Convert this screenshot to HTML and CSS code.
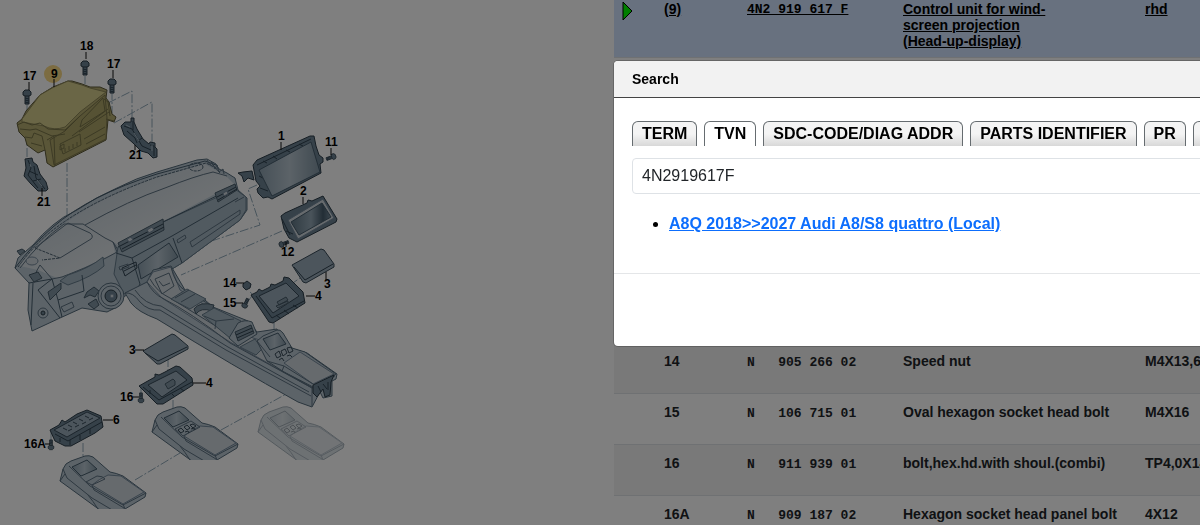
FILE: index.html
```html
<!DOCTYPE html>
<html lang="en">

<head>
    <meta charset="UTF-8">
    <meta name="viewport" content="width=device-width, initial-scale=1.0">
    <title>Parts Catalogue</title>
    <link rel="stylesheet" href="styles.css">
</head>

<body>
    <div class="page">
        <div class="diagram">
            <svg class="diagram-svg" width="350" height="515" viewBox="0 0 350 515">
                <defs>
                    <linearGradient id="topGrad" x1="0" y1="0" x2="1" y2="1">
                        <stop offset="0" stop-color="#b4c2cc" />
                        <stop offset="0.6" stop-color="#dce2e6" />
                        <stop offset="1" stop-color="#a8b8c4" />
                    </linearGradient>
                    <linearGradient id="glass" x1="0" y1="0" x2="1" y2="0">
                        <stop offset="0" stop-color="#8ca0ae" />
                        <stop offset="0.5" stop-color="#b8c6d0" />
                        <stop offset="1" stop-color="#8094a2" />
                    </linearGradient>
                    <linearGradient id="darkGlass" x1="0" y1="0" x2="1" y2="0">
                        <stop offset="0" stop-color="#607684" />
                        <stop offset="0.5" stop-color="#94a8b6" />
                        <stop offset="0.8" stop-color="#465c6c" />
                        <stop offset="1" stop-color="#768c9c" />
                    </linearGradient>
                    <clipPath id="cutMid">
                        <rect x="0" y="400" width="350" height="60" />
                    </clipPath>
                    <!-- bolt, head up -->
                    <g id="bolt" class="dark">
                        <path d="M-2 3h4v10h-4z" />
                        <path d="M-4 1l2-2h4l2 2v3l-2 1h-4l-2-1z" />
                        <path class="line" d="M-2 7l4 1M-2 9l4 1M-2 11l4 1" />
                    </g>
                    <!-- rear part of the centre console -->
                    <g id="consoleTop">
                        <path class="metal" d="M155 420Q157 414 163 412L177 407Q181 406 185 408L202 423Q208 424 215 427L238 444L237 448L217 460L196 464L152 432Z" />
                        <path class="line" d="M155 420L159 429L184 449L206 462M152 432L157 425M161 417L182 437L215 456L238 444M184 436L186 441L216 459" />
                        <path class="light" d="M184 436Q191 430 200 426L213 427L236 443L215 455Z" />
                        <path class="line" d="M217 460L215 455M180 446Q185 452 190 460" />
                        <path d="M164 418L179 411L189 420L173 427Z" fill="url(#glass)" class="edge" />
                    </g>
                    <g id="knobs">
                        <path class="line" d="M175 429L191 421L200 427L183 436Z" />
                        <path class="knob" d="M178 430l3-2 3 3-3 2zM184 427l3-2 3 3-3 2zM190 425l3-1 3 2-3 2zM185 432l3-1 1 2M191 429l3-1 1 2" />
                    </g>
                </defs>

                <!-- assembly lines -->
                <g class="axis">
                    <path d="M85 76V84M27 103V158M67 163V240M112 91V113M108 103L132 91V120M114 123L152 102V142" />
                    <path d="M257 185L248 189L260 225L160 258M282 231L181 275M274 323V345M290 285L300 278M168 358V375M173 400V416M83 443V467M135 480L180 453M221 430L288 393M250 292L260 301M247 302L253 295M51 432V442M141 386V394" />
                </g>

                <!-- dashboard -->
                <path class="metal" d="M15 268L18 258L33 245Q42 234 53 225Q62 217 77 210Q96 197 117 188Q136 178 157 172L197 160L207 159L216 164L219 169L227 173L235 178L238 190L247 198V210L240 220L182 263L137 290L123 297L117 307L107 312L82 308L60 318L32 331L28 310L29 283Z" />
                <path d="M20 266Q38 240 64 224Q100 197 155 178L205 164L226 176L234 184L118 245L113 242L115 253L72 273L57 278L38 270Z" fill="url(#topGrad)" />
                <path class="edge" d="M15 268Q33 244 53 227Q90 195 157 174L205 161L216 165" />
                <path class="seam" d="M18 267Q36 242 57 227Q93 200 157 177L206 163L218 169" />
                <path class="line" d="M20 268Q40 241 64 224L83 224L105 238L113 242L118 250M85 225Q130 200 165 188Q195 176 213 172L227 176" />
                <path class="line" d="M68 223L90 233Q94 236 91 239L60 258M35 248L68 223M113 242L117 252Q98 263 72 273Q62 278 52 279L40 265Q36 271 35 276" />
                <path class="seam" d="M35 248L60 258L42 260" />
                <path class="shade" d="M68 275Q90 268 103 257L104 266Q92 277 68 285L60 281Z" />
                <path class="shade" d="M118 247L163 222L235 189L246 197V210L240 220L182 263L137 290L124 294L114 274Z" />
                <path class="edge" d="M118 247L163 222L235 187L237 190M116 253L132 258L172 236L238 198M132 258L140 284L137 290M173 238L182 263M52 279L58 300L84 291L82 275M58 300L62 317M29 283L52 279L38 290L60 318M33 283L31 325" />
                <path class="slot" d="M118 243L163 219L164 230L122 252ZM215 193L235 184L237 190L218 202ZM48 292L61 283L61 289L50 300Z" />
                <path class="line" d="M120 246L163 224M122 249L164 227M217 197L236 187M218 200L237 189M122 268L136 262L137 268L125 276ZM124 271l12-6" />
                <path d="M127 239l4-2 2 3-4 2zM147 230l5-3 2 3-5 3zM223 193l4-2 1 3-4 2z" class="light" />
                <path d="M138 265L169 243L178 257L141 279Z" fill="url(#glass)" class="edge" />
                <path class="line" d="M190 242L240 210L240 214L192 247ZM235 202L244 197M177 240L185 235L186 238L178 243ZM61 307L72 302L74 307L64 312ZM119 267l9-3 1 3-9 3z" />
                <path class="slot" d="M84 298l6-3 5 2 4-6-5-4-7 5zM88 304l8-5 3 6-5 4z" />
                <circle class="metal" cx="111" cy="296" r="13" />
                <circle class="line" cx="111" cy="296" r="10" />
                <circle class="dark" cx="111" cy="296" r="6" />
                <circle class="light" cx="112" cy="296" r="2" />
                <circle class="line" cx="43" cy="313" r="5" />
                <circle class="dark" cx="43" cy="313" r="2" />
                <ellipse class="light" cx="32" cy="261" rx="6" ry="4" />
                <ellipse class="seam" cx="196" cy="167" rx="7" ry="4" />
                <path class="line" d="M207 160l3 5 2-3 3 7 2-4 2 7 4-3 1 5M211 163l9 10" />
                <path class="slot" d="M17 251l5-2 3 2-5 4zM29 275l9-3 4 6-8 4z" />

                <!-- centre console -->
                <path class="metal" d="M125 293L147 282L153 270L171 266L185 290L205 300L213 307L248 321L257 332L277 329L283 343L293 349L307 353L337 374L336 379L332 381V396L323 398L320 392L312 407L298 402Q235 367 157 319Q138 312 131 303Z" />
                <path class="light" d="M147 282L162 298L230 342L266 362L312 388L335 376L307 353L285 347L253 338L200 302L180 290L171 267L153 272Z" />
                <path class="line" d="M125 293Q133 292 140 302Q148 311 160 310L226 350L311 396M147 282Q153 294 164 299Q190 312 230 343L312 388V406M135 290Q145 305 161 306L228 347L309 392M171 267Q175 285 186 291L214 307M150 279Q157 292 170 298L232 336" />
                <path class="shade" d="M171 299L187 289L206 299L190 309Z" />
                <path class="line" d="M175 298l14-8M181 302l14-8M155 279l14-6 5 13-12 8zM159 281l4 5 7-3" />
                <path class="slot" d="M194 309Q200 301 214 305L212 311Q201 307 196 314Z" />
                <path class="shade" d="M202 315L214 308L241 321L230 338Z" />
                <path class="line" d="M204 316l12 5-1 8M216 321l18-2" />
                <path class="metal" d="M229 338L238 323Q245 319 252 322L257 334L238 346Z" />
                <path class="slot" d="M235 332L251 325L254 333L238 341Z" />
                <path class="line" d="M236 335l16-7M237 338l16-7" />
                <path class="shade" d="M240 347L255 339L262 349L256 355Z" />
                <path class="metal" d="M257 341L263 336L277 330Q280 329 283 333L292 348L305 352L336 374L313 387L284 372L267 361Z" />
                <path d="M263 339L278 333L286 344L270 350Z" fill="url(#glass)" class="edge" />
                <path class="knob" d="M275 354l4-3 2 5-4 2zM281 351l4-2 2 4-4 3zM287 348l4-1 2 4-4 2zM279 360l3-2 2 3M287 356l3-1 2 2" />
                <path class="light" d="M284 363L300 352L334 374L313 384Z" />
                <path class="line" d="M267 361L284 366L313 384M284 366L282 371L313 388M257 341L270 357" />
                <path class="dark" d="M313 385L334 375L331 382L330 395L325 397L323 389L317 397L313 393Z" />
                <path class="line" d="M318 386l3 6M323 384l4 5M328 382v8" />

                <!-- console variants -->
                <g clip-path="url(#cutMid)">
                    <use href="#consoleTop" />
                    <use href="#knobs" />
                    <g opacity="0.5">
                        <use href="#consoleTop" x="106" />
                        <use href="#knobs" x="106" />
                    </g>
                </g>
                <g transform="translate(-92 49)" clip-path="url(#cutMid)">
                    <use href="#consoleTop" />
                    <path class="line" d="M178 433l11-6q6 0 8 3l-13 6z" />
                </g>

                <!-- 9 control unit -->
                <path class="unit" d="M17 123L22 119L26 111L40 95L53 87L68 81L72 81L82 84L90 87L100 87L107 90L106 98L109 102L112 114L116 117L114 122L108 120L106 140L53 167L47 163L45 150L38 153L27 145L25 138L19 132Z" />
                <path class="unit-top" d="M22 119L40 95Q52 87 68 81L82 85L90 88L106 92L80 112L65 127Q54 131 44 126L22 122Z" />
                <path class="unit-side" d="M65 131L80 116L105 95L107 118L106 139L54 165L50 140Z" />
                <path class="unit-line" d="M17 125L24 122L32 125L40 123L48 129L65 130L80 116M20 129L30 130L36 129L52 136L65 134M25 137L32 138L34 133L42 136L45 150M47 140L54 136L55 166M72 136L108 109M79 132L109 112M82 120L103 98L105 111L80 127ZM60 144L80 134L81 145L63 154ZM65 148v4M69 146v4M73 144v4M77 142v4M84 139L105 127M86 144L105 134M31 143L42 146" />
                <path class="unit-line" d="M60 146l4-2v4l-4 2zM104 99l4 3 2 14M106 119l8 2" />

                <!-- brackets -->
                <path class="dark" d="M25 159L32 158L33 162L37 165L40 174L46 182L48 189L46 191L38 191L31 184L24 176L26 168Z" />
                <path class="line" d="M28 160l3 8-3 7 10 13M34 166l2 12 9 11M29 171l9 4M33 181l8-2" />
                <path class="dark" d="M121 126L125 122L131 122V118H134V122L137 129L143 139L149 144L150 142L155 143V147L157 149V157L153 158L148 153L141 151L133 143L124 135Z" />
                <path class="line" d="M124 126l8 3 10 17 9 4M127 131l8 7 2 5M133 121v9M150 145l4 1v10M138 141l4-3" />
                <path class="glint" d="M30 164l1 3M37 180l5 6M126 125l4 2M134 133l5 8M152 145v6" />

                <!-- 1 display -->
                <path class="dark" d="M238 173L243 172L252 171L254 180L248 178L244 182L242 176Z" />
                <path class="dark" d="M253 165L257 160L310 136L314 136L316 146L319 155L323 158L323 162L320 164L321 173L272 199L268 197L263 198L258 193L257 189L260 186L256 181Z" />
                <path class="line" d="M257 165L311 139M263 161l4 2M273 156l4 3M286 150l4 2M299 144l4 2M260 188l8 3M259 176l4 2" />
                <path d="M259 170L311 142L320 172L272 196Z" fill="url(#glass)" class="edge" />
                <!-- 2 display -->
                <path class="dark" d="M281 216L285 213L307 203L308 200L312 201L323 196L337 219L336 222L297 242L289 238L284 229Z" />
                <path class="line" d="M282 219l8 16M286 231l7 3" />
                <path class="light" d="M288 220L323 199L334 218L298 239Z" />
                <path d="M291 222L322 203L331 217L299 235Z" fill="url(#darkGlass)" class="edge" />
                <!-- 3, 4 right -->
                <path class="plate" d="M292 265L321 249L324 250L334 264V267L306 283L303 282Z" />
                <path class="line" d="M294 267L305 280L333 264" />
                <path class="dark" d="M251 295L257 292L259 289L262 291L270 287L271 284L275 285L283 281L284 277L289 278L303 292L305 303L273 323L269 322Z" />
                <path class="plate" d="M259 296L286 283L299 296L273 313Z" />
                <path class="line" d="M256 296L272 318L304 301M276 315l4 3M284 310l5 4M293 305l5 3" />
                <path class="slot" d="M277 302l9-5 2 3-9 5zM276 306l12-5v2l-10 5z" />
                <!-- 3, 4 left -->
                <path class="plate" d="M143 351L172 334L175 335L188 346V349L160 364L157 364Z" />
                <path class="line" d="M145 353L158 361L187 347" />
                <path class="dark" d="M139 386L146 382L155 377V374L159 375L165 372L176 366L180 367L192 378L193 385L163 404L157 404Z" />
                <path class="plate" d="M148 385L176 371L187 380L162 397Z" />
                <path class="line" d="M143 387L159 400L192 382M150 390v4M172 394l3 3M180 388l4 3" />
                <path class="slot" d="M165 384l8-5 2 2v4l-7 4z" />
                <!-- 6 -->
                <path class="dark" d="M50 430L59 425L62 420L65 422L77 414L87 410L101 416L103 427L95 433L71 446L65 446L55 441Z" />
                <path class="line" d="M55 434L68 441L102 422M60 438v4M70 440v5M80 435v5M90 429v5" />
                <path class="plate" d="M54 430L87 412L100 418L67 437Z" />
                <path class="knob" d="M63 428l4 2M68 425l4 2M73 422l4 2M79 419l4 2M85 416l4 2M68 431l4-2M75 427l4-2M82 424l4-2M89 420l4-2" />

                <!-- bolts and nut -->
                <use href="#bolt" x="85" y="62" />
                <use href="#bolt" x="27" y="91" />
                <use href="#bolt" x="112" y="80" />
                <use href="#bolt" transform="translate(335 156) rotate(70) scale(.7)" />
                <use href="#bolt" transform="translate(280 245) rotate(-110) scale(.7)" />
                <use href="#bolt" transform="translate(244 307) rotate(205) scale(.7)" />
                <use href="#bolt" transform="translate(141 402) rotate(180) scale(.7)" />
                <use href="#bolt" transform="translate(51 449) rotate(180) scale(.7)" />
                <path class="dark" d="M243 284l4-3 4 3-1 4-4 2-3-3z" />

                <!-- callouts -->
                <circle class="marker" cx="53" cy="74" r="9" />
                <path class="leader" d="M86 52v7M29 82v8M113 70v8M54 79v8M42 188v8M135 145v5M281 142v8M331 148v7M303 197v7M286 242v5M326 272v8M306 296h9M236 283h8M236 303h7M135 350h9M193 383h13M133 397h6M103 420h10M45 444h5" />
                <g class="callout">
                    <text x="80" y="50">18</text>
                    <text x="23" y="80">17</text>
                    <text x="51" y="78">9</text>
                    <text x="107" y="68">17</text>
                    <text x="129" y="159">21</text>
                    <text x="37" y="206">21</text>
                    <text x="278" y="140">1</text>
                    <text x="325" y="146">11</text>
                    <text x="300" y="195">2</text>
                    <text x="281" y="256">12</text>
                    <text x="324" y="288">3</text>
                    <text x="315" y="300">4</text>
                    <text x="223" y="287">14</text>
                    <text x="223" y="307">15</text>
                    <text x="129" y="354">3</text>
                    <text x="206" y="387">4</text>
                    <text x="120" y="401">16</text>
                    <text x="113" y="424">6</text>
                    <text x="24" y="448">16A</text>
                </g>
            </svg>
        </div>

        <div class="parts">
            <table class="parts-table">
                <colgroup>
                    <col class="col-mark">
                    <col class="col-pos">
                    <col class="col-number">
                    <col class="col-name">
                    <col class="col-note">
                </colgroup>
                <tbody>
                    <tr class="selected">
                        <td><svg class="arrow" width="12" height="20" viewBox="0 0 12 20"><path d="M1 1v18l9-9z" /></svg></td>
                        <td>(9)</td>
                        <td class="number">4N2 919 617 F</td>
                        <td>Control unit for wind-<br>screen projection<br>(Head-up-display)</td>
                        <td>rhd</td>
                    </tr>
                    <tr class="covered">
                        <td colspan="5"></td>
                    </tr>
                    <tr class="striped">
                        <td></td>
                        <td>14</td>
                        <td class="number">N   905 266 02</td>
                        <td>Speed nut</td>
                        <td>M4X13,6</td>
                    </tr>
                    <tr>
                        <td></td>
                        <td>15</td>
                        <td class="number">N   106 715 01</td>
                        <td>Oval hexagon socket head bolt</td>
                        <td>M4X16</td>
                    </tr>
                    <tr class="striped">
                        <td></td>
                        <td>16</td>
                        <td class="number">N   911 939 01</td>
                        <td>bolt,hex.hd.with shoul.(combi)</td>
                        <td>TP4,0X14</td>
                    </tr>
                    <tr>
                        <td></td>
                        <td>16A</td>
                        <td class="number">N   909 187 02</td>
                        <td>Hexagon socket head panel bolt<br>Benennung 10.07.2018</td>
                        <td>4X12</td>
                    </tr>
                </tbody>
            </table>
        </div>
    </div>

    <div class="backdrop"></div>

    <div class="modal" role="dialog" aria-labelledby="searchTitle">
        <div class="modal-header">
            <label id="searchTitle" for="searchInput">Search</label>
        </div>
        <div class="modal-body">
            <div class="tabs">
                <button type="button" class="tab">TERM</button>
                <button type="button" class="tab active">TVN</button>
                <button type="button" class="tab">SDC-CODE/DIAG ADDR</button>
                <button type="button" class="tab">PARTS IDENTIFIER</button>
                <button type="button" class="tab">PR</button>
                <button type="button" class="tab tab-more"></button>
            </div>
            <input type="text" id="searchInput" class="search-input" value="4N2919617F">
            <ul class="results">
                <li><a href="#">A8Q 2018&gt;&gt;2027 Audi A8/S8 quattro (Local)</a></li>
            </ul>
        </div>
        <div class="modal-footer"></div>
    </div>
</body>

</html>
```

FILE: styles.css
```css
* {
    box-sizing: border-box;
}

body {
    margin: 0;
    font-family: "Liberation Sans", Arial, sans-serif;
    font-size: 14px;
    background-color: white;
    height: 100vh;
    overflow: hidden;
}

.page {
    display: flex;
    height: 100vh;
    overflow: hidden;
}

.diagram {
    flex: 0 0 614px;
}

.diagram-svg {
    display: block;
}

/* diagram drawing */
.diagram-svg path,
.diagram-svg circle,
.diagram-svg ellipse {
    stroke-linejoin: round;
    stroke-width: 1;
}

.metal {
    fill: #b8c6d0;
    stroke: #546a7a;
}

.light {
    fill: #ccd4da;
    stroke: #74889a;
}

.shade {
    fill: #a2b4c0;
    stroke: #647a8a;
}

.plate {
    fill: #98aab8;
    stroke: #384a58;
}

.dark {
    fill: #6c8292;
    stroke: #2c3c48;
}

.slot {
    fill: #8094a2;
    stroke: #465a68;
}

.edge {
    stroke: #465c6c;
}

path.edge:not([fill]) {
    fill: none;
}

.line,
.seam,
.knob {
    fill: none;
    stroke: #5c7080;
}

.seam {
    stroke-dasharray: 3 1;
    stroke: #4c6070;
}

.knob {
    stroke: #384a58;
}

.dark .line,
.dark + .line,
.plate + .line,
.slot + .line {
    stroke: #304250;
}

.glint {
    fill: none;
    stroke: #a4b6c2;
}

.axis {
    fill: none;
    stroke: #90a8b8;
    stroke-dasharray: 9 2 2 2;
}

.unit {
    fill: #b4ac70;
    stroke: #5c5838;
}

.unit-top {
    fill: #d4cc8c;
    stroke: #8c8658;
}

.unit-side {
    fill: #aca468;
    stroke: #7c764c;
}

.unit-line {
    fill: none;
    stroke: #787448;
}

.marker {
    fill: #f8d884;
}

.leader {
    fill: none;
    stroke: #101010;
}

.callout {
    font-size: 12px;
    font-weight: bold;
}

/* parts list */
.parts {
    flex: 1;
    overflow: hidden;
}

.parts-table {
    width: 100%;
    min-width: 640px;
    table-layout: fixed;
    border-collapse: separate;
    border-spacing: 0;
    font-weight: bold;
    line-height: 16px;
    color: #212529;
}

.col-mark {
    width: 42px;
}

.col-pos {
    width: 83px;
}

.col-number {
    width: 156px;
}

.col-name {
    width: 242px;
}

.parts-table td {
    height: 51px;
    padding: 10px 8px 8px;
    vertical-align: top;
    border-bottom: 1px solid #dee2e6;
}

.parts-table .number {
    padding-top: 12px;
    font-family: "Liberation Mono", "Courier New", monospace;
    font-size: 13px;
    white-space: pre;
}

.parts-table .selected td {
    padding-top: 1px;
    background-color: #d0e2ff;
    color: black;
    text-decoration: underline;
}

.parts-table .selected .number {
    padding-top: 2px;
}

.parts-table .striped td {
    background-color: #f2f2f2;
}

/* rows under the search window */
.parts-table .covered td {
    height: 285px;
}

.arrow {
    display: block;
}

.arrow path {
    fill: lime;
    stroke: black;
}

.backdrop {
    position: fixed;
    left: 0;
    top: 0;
    width: 100%;
    height: 100%;
    background-color: rgba(0, 0, 0, 0.5);
}

/* search window */
.modal {
    position: fixed;
    left: 613px;
    top: 60px;
    width: 800px;
    background-color: white;
    background-clip: padding-box;
    border: 1px solid rgba(0, 0, 0, 0.2);
    border-radius: 5px;
    overflow: hidden;
}

.modal-header {
    padding: 10px 18px;
    line-height: 16px;
    font-weight: bold;
    background-color: #f2f2f2;
    border-bottom: 1px solid #444;
}

.modal-body {
    padding: 23px 18px 37px;
    border-bottom: 1px solid #e4e6e8;
}

.tabs {
    display: flex;
    gap: 7px;
    margin-bottom: 12px;
}

.tab {
    flex: none;
    height: 25px;
    padding: 0 9px;
    font-family: inherit;
    font-size: 16px;
    font-weight: bold;
    color: black;
    background: linear-gradient(#f4f4f4 50%, #d8d8d8);
    border: 1px solid #666c70;
    border-bottom: none;
    border-radius: 6px 6px 0 0;
    cursor: pointer;
}

.tab.active {
    background: white;
}

.tab-more {
    width: 66px;
}

.search-input {
    display: block;
    width: 100%;
    height: 36px;
    padding: 0 9px;
    font-family: inherit;
    font-size: 16px;
    color: #212529;
    border: 1px solid #dee2e6;
    border-radius: 4px;
}

.results {
    margin: 18px 0 0;
    padding-left: 37px;
    font-size: 16px;
    line-height: 24px;
}

.results a {
    color: #0d6efd;
    font-weight: bold;
}

.modal-footer {
    height: 72px;
}
```
